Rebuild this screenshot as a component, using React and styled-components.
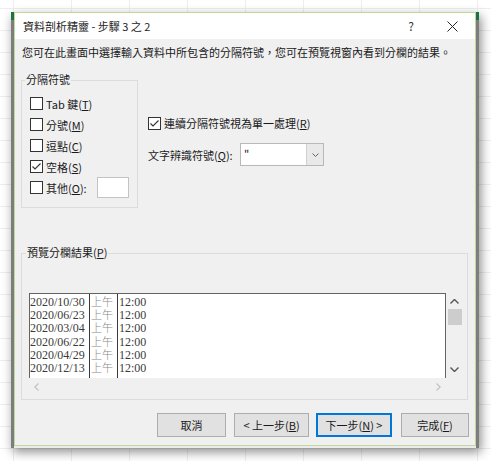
import React from "react";
import styled, { createGlobalStyle } from "styled-components";

const GlobalStyle = createGlobalStyle`
  body {
    margin: 0;
    background: #fff;
    font-family: "Noto Sans CJK TC", "Noto Sans", sans-serif;
  }
`;

const Page = styled.div`
  width: 491px;
  height: 461px;
  box-sizing: border-box;
  padding: 12px 0 0 11px;
  overflow: hidden;
  background-color: #fff;
  background-image: linear-gradient(to right, #eeeeee 1px, transparent 1px),
    linear-gradient(to bottom, #eeeeee 1px, transparent 1px);
  background-size: 58px 22px;
  background-position: 13px 8px;
`;

const Frame = styled.div`
  display: flex;
  align-items: flex-start;
  width: 468px;
  height: 436px;
  background: #ececec;
  box-shadow: 2px 4px 10px rgba(0, 0, 0, 0.45);
`;

const Edge = styled.div`
  width: 3px;
  flex: none;
  align-self: stretch;
  background: linear-gradient(#1e7145 0 8px, #7d7d7d 8px);
`;

const Dialog = styled.div`
  width: 462px;
  height: 434px;
  flex: none;
  box-sizing: border-box;
  border: 1px solid #bfd99a;
  background: #f0f0f0;
  display: flex;
  flex-direction: column;
  font-size: 11px;
  line-height: 14px;
  color: #1a1a1a;
`;

const TitleBar = styled.div`
  height: 26px;
  flex: none;
  background: #fff;
  display: flex;
  align-items: center;
  padding-left: 8px;
`;

const TitleText = styled.div`
  flex: 1;
  color: #222;
`;

const TitleButton = styled.div`
  width: ${(p) => p.$w}px;
  height: 26px;
  display: flex;
  align-items: center;
  justify-content: center;
  font-size: 12px;
  color: #333;
`;

const Body = styled.div`
  flex: 1;
  display: flex;
  flex-direction: column;
  padding: 0 6px;
`;

const Description = styled.div`
  margin-top: 6px;
  padding-left: 1px;
  white-space: nowrap;
`;

const TopRow = styled.div`
  display: flex;
  margin-top: 21px;
`;

const Group = styled.div`
  position: relative;
  box-sizing: border-box;
  width: ${(p) => p.$w}px;
  height: ${(p) => p.$h}px;
  border: 1px solid #dcdcdc;
  padding: ${(p) => p.$pad};
`;

const Legend = styled.div`
  position: absolute;
  top: -9px;
  left: ${(p) => p.$left}px;
  padding: 0 1px;
  background: #f0f0f0;
  line-height: 14px;
`;

const CheckRow = styled.div`
  display: flex;
  align-items: center;
  height: ${(p) => p.$h || 21}px;
  white-space: nowrap;
`;

const Box = styled.span`
  width: 13px;
  height: 13px;
  box-sizing: border-box;
  border: 1px solid #333;
  background: #fff;
  margin-right: 3px;
  flex: none;
  display: flex;
  align-items: center;
  justify-content: center;
`;

const OtherInput = styled.div`
  width: 32px;
  height: 21px;
  box-sizing: border-box;
  margin-left: 10px;
  background: #fff;
  border: 1px solid #c4c4c4;
`;

const RightCol = styled.div`
  margin-left: 10px;
  padding-top: 33px;
  display: flex;
  flex-direction: column;
`;

const QuoteRow = styled.div`
  display: flex;
  align-items: center;
  margin-top: 10px;
  height: 23px;
`;

const QuoteLabel = styled.div`
  width: 92px;
  white-space: nowrap;
`;

const Select = styled.div`
  width: 84px;
  height: 23px;
  box-sizing: border-box;
  border: 1px solid #b8b8b8;
  background: #fff;
  display: flex;
`;

const SelectValue = styled.div`
  flex: 1;
  padding: 3px 0 0 3px;
  line-height: 12px;
  font-size: 11px;
`;

const SelectArrow = styled.div`
  width: 16px;
  border-left: 1px solid #d0d0d0;
  background: #e9e9e9;
  display: flex;
  align-items: center;
  justify-content: center;
`;

const PreviewGroup = styled(Group)`
  margin-top: 45px;
`;

const Preview = styled.div`
  display: grid;
  grid-template-columns: 417px 17px;
  grid-template-rows: 85px 17px;
`;

const Sheet = styled.div`
  box-sizing: border-box;
  border: 1px solid #646464;
  border-bottom: none;
  background: #fff;
  display: flex;
  overflow: hidden;
  font-family: "Liberation Serif", "Noto Sans CJK TC", serif;
  font-size: 12px;
  line-height: 13.2px;
  padding-top: 1px;
`;

const Column = styled.div`
  width: ${(p) => (p.$w ? `${p.$w}px` : "auto")};
  flex: ${(p) => (p.$w ? "none" : "1")};
  border-right: ${(p) => (p.$w ? "1px solid #3a3a3a" : "none")};
  margin-top: -1px;
  padding-top: 2px;
  padding-left: ${(p) => p.$pl || 0}px;
  color: ${(p) => p.$c};
  white-space: nowrap;
`;

const Cell = styled.div`
  height: 13.2px;
  line-height: 13.2px;
`;

const CjkCell = styled(Cell)`
  font-size: 11px;
  font-weight: 300;
`;

const VScroll = styled.div`
  display: flex;
  flex-direction: column;
  align-items: center;
  background: #f0f0f0;
`;

const Thumb = styled.div`
  width: 14px;
  height: 16px;
  background: #cdcdcd;
  margin-top: 1px;
`;

const ScrollGap = styled.div`
  height: ${(p) => p.$h}px;
  flex: none;
`;

const ScrollSpacer = styled.div`
  flex: 1;
`;

const HScroll = styled.div`
  display: flex;
  align-items: center;
  justify-content: space-between;
  padding: 0 5px 0 5px;
  background: #f0f0f0;
`;

const ButtonRow = styled.div`
  display: flex;
  justify-content: flex-end;
  margin-top: 13px;
`;

const Button = styled.div`
  width: ${(p) => p.$w}px;
  height: 24px;
  margin-left: ${(p) => p.$gap}px;
  box-sizing: border-box;
  background: #e1e1e1;
  border: 1px solid ${(p) => (p.$default ? "#0078d7" : "#adadad")};
  box-shadow: ${(p) => (p.$default ? "inset 0 0 0 1px #0078d7" : "none")};
  display: flex;
  align-items: center;
  justify-content: center;
  white-space: nowrap;
  color: #1a1a1a;
`;

const Check = () => (
  <svg width="11" height="11" viewBox="0 0 11 11">
    <polyline points="1.5,5.5 4,8 9.5,2.5" fill="none" stroke="#333" strokeWidth="1.1" />
  </svg>
);

const Chevron = ({ dir = "down", color = "#555", w = 8, h = 5, sw = 1.3 }) => {
  const pts = {
    down: `0.5,0.5 ${w / 2},${h - 0.5} ${w - 0.5},0.5`,
    up: `0.5,${h - 0.5} ${w / 2},0.5 ${w - 0.5},${h - 0.5}`,
  }[dir];
  return (
    <svg width={w} height={h} viewBox={`0 0 ${w} ${h}`}>
      <polyline points={pts} fill="none" stroke={color} strokeWidth={sw} />
    </svg>
  );
};

const SideChevron = ({ dir }) => (
  <svg width="5" height="8" viewBox="0 0 5 8">
    <polyline
      points={dir === "left" ? "4.5,0.5 0.8,4 4.5,7.5" : "0.5,0.5 4.2,4 0.5,7.5"}
      fill="none"
      stroke="#c2c2c2"
      strokeWidth="1.2"
    />
  </svg>
);

const CheckItem = ({ checked, children, h }) => (
  <CheckRow $h={h}>
    <Box>{checked && <Check />}</Box>
    {children}
  </CheckRow>
);

const dates = ["2020/10/30", "2020/06/23", "2020/03/04", "2020/06/22", "2020/04/29", "2020/12/13"];

export default function App() {
  return (
    <Page>
      <GlobalStyle />
      <Frame>
        <Edge />
        <Dialog>
          <TitleBar>
            <TitleText>資料剖析精靈 - 步驟 3 之 2</TitleText>
            <TitleButton $w={36}>?</TitleButton>
            <TitleButton $w={46}>
              <svg width="11" height="11" viewBox="0 0 11 11">
                <path d="M0.5 0.5 L10.5 10.5 M10.5 0.5 L0.5 10.5" stroke="#222" strokeWidth="1" />
              </svg>
            </TitleButton>
          </TitleBar>
          <Body>
            <Description>
              您可在此畫面中選擇輸入資料中所包含的分隔符號，您可在預覽視窗內看到分欄的結果。
            </Description>
            <TopRow>
              <Group $w={117} $h={128} $pad="12px 0 0 8px">
                <Legend $left={3}>分隔符號</Legend>
                <CheckItem>Tab 鍵(<u>T</u>)</CheckItem>
                <CheckItem>分號(<u>M</u>)</CheckItem>
                <CheckItem>逗點(<u>C</u>)</CheckItem>
                <CheckItem checked>空格(<u>S</u>)</CheckItem>
                <CheckItem>
                  其他(<u>O</u>):
                  <OtherInput />
                </CheckItem>
              </Group>
              <RightCol>
                <CheckItem checked h={20}>
                  連續分隔符號視為單一處理(<u>R</u>)
                </CheckItem>
                <QuoteRow>
                  <QuoteLabel>文字辨識符號(<u>Q</u>):</QuoteLabel>
                  <Select>
                    <SelectValue>"</SelectValue>
                    <SelectArrow>
                      <Chevron w={7} h={4} sw={1} color="#666" />
                    </SelectArrow>
                  </Select>
                </QuoteRow>
              </RightCol>
            </TopRow>
            <PreviewGroup $w={447} $h={147} $pad="39px 0 0 7px">
              <Legend $left={4}>預覽分欄結果(<u>P</u>)</Legend>
              <Preview>
                <Sheet>
                  <Column $w={59} $c="#3a3a3a">
                    {dates.map((d) => (
                      <Cell key={d}>{d}</Cell>
                    ))}
                  </Column>
                  <Column $w={26} $c="#8a8a8a" $pl={1}>
                    {dates.map((d) => (
                      <CjkCell key={d}>上午</CjkCell>
                    ))}
                  </Column>
                  <Column $c="#3a3a3a" $pl={1}>
                    {dates.map((d) => (
                      <Cell key={d}>12:00</Cell>
                    ))}
                  </Column>
                </Sheet>
                <VScroll>
                  <ScrollGap $h={6} />
                  <Chevron dir="up" color="#555" w={9} h={5} sw={1.4} />
                  <ScrollGap $h={4} />
                  <Thumb />
                  <ScrollSpacer />
                  <Chevron dir="down" color="#555" w={9} h={5} sw={1.4} />
                  <ScrollGap $h={6} />
                </VScroll>
                <HScroll>
                  <SideChevron dir="left" />
                  <SideChevron dir="right" />
                </HScroll>
                <div />
              </Preview>
            </PreviewGroup>
            <ButtonRow>
              <Button $w={69} $gap={0}>取消</Button>
              <Button $w={75} $gap={8}>&lt; 上一步(<u>B</u>)</Button>
              <Button $w={76} $gap={7} $default>
                下一步(<u>N</u>) &gt;
              </Button>
              <Button $w={68} $gap={9}>完成(<u>F</u>)</Button>
            </ButtonRow>
          </Body>
        </Dialog>
        <Edge />
      </Frame>
    </Page>
  );
}
